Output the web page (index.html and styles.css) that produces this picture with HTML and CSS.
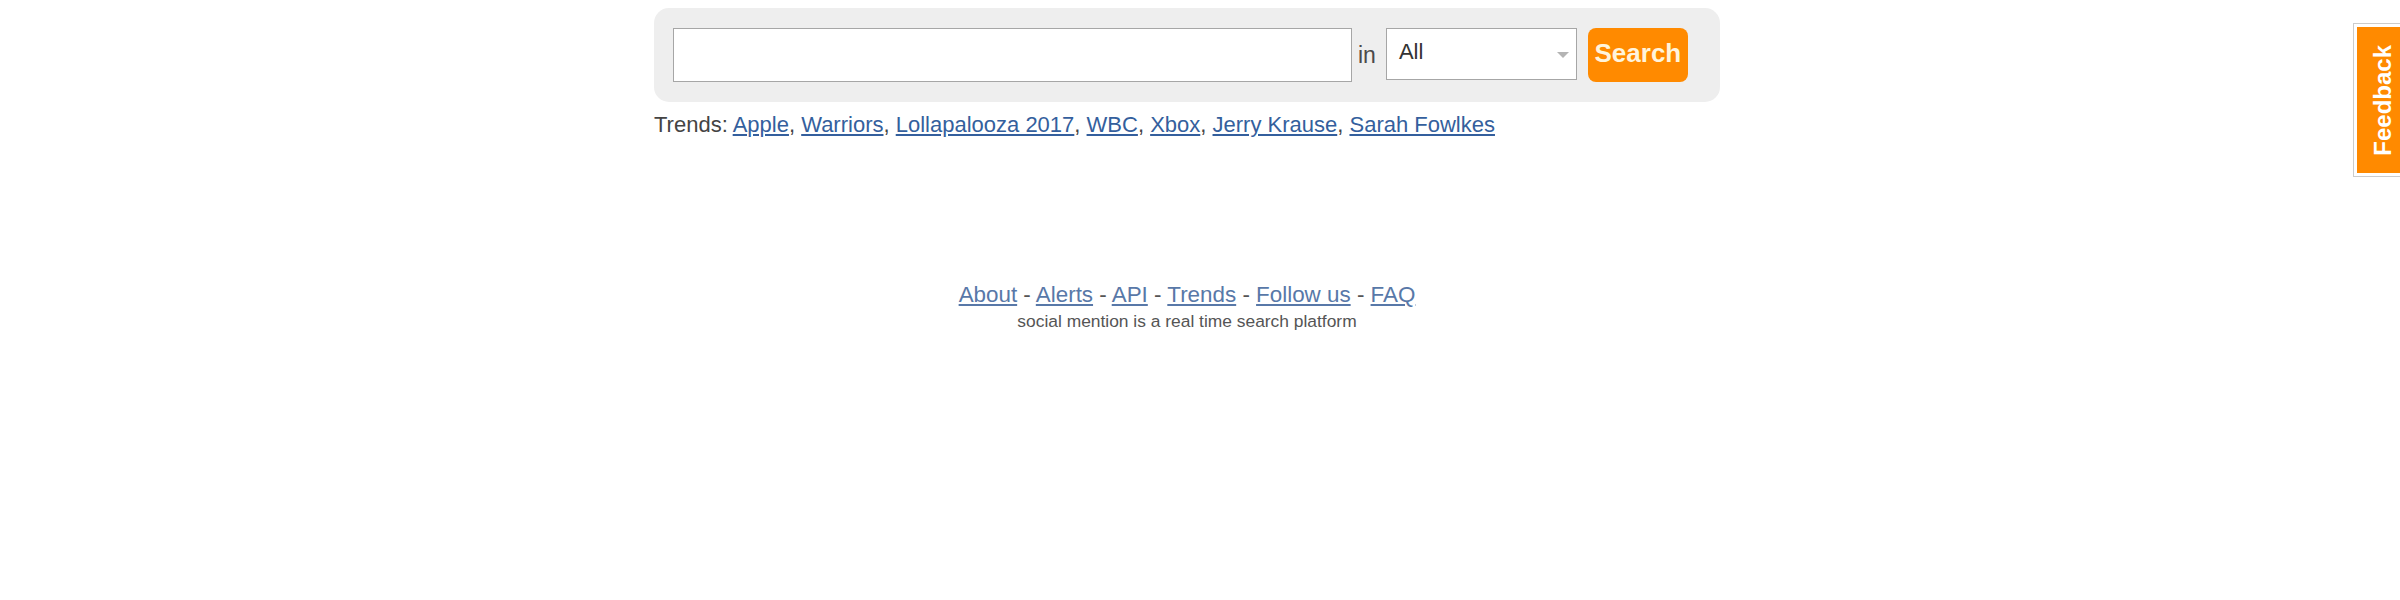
FILE: index.html
```html
<!DOCTYPE html>
<html lang="en">
<head>
<meta charset="utf-8">
<title>Social Mention</title>
<link rel="stylesheet" href="styles.css">
</head>
<body>
<div class="page">
  <div class="column">
    <form class="search-box">
      <input class="query" type="text">
      <span class="in">in</span>
      <div class="select"><span class="select-value">All</span><span class="select-arrow"></span></div>
      <button class="search-btn" type="button">Search</button>
    </form>
    <div class="trends">Trends: <a href="#">Apple</a>, <a href="#">Warriors</a>, <a href="#">Lollapalooza 2017</a>, <a href="#">WBC</a>, <a href="#">Xbox</a>, <a href="#">Jerry Krause</a>, <a href="#">Sarah Fowlkes</a></div>
    <div class="footer">
      <div class="footer-links"><a href="#">About</a> - <a href="#">Alerts</a> - <a href="#">API</a> - <a href="#">Trends</a> - <a href="#">Follow us</a> - <a href="#">FAQ</a></div>
      <div class="tagline">social mention is a real time search platform</div>
    </div>
  </div>
</div>
<div class="feedback"><div class="feedback-inner"><span class="feedback-text">Feedback</span></div></div>
</body>
</html>
```

FILE: styles.css
```css
html, body {
  margin: 0;
  padding: 0;
  background: #ffffff;
}
body {
  font-family: "Liberation Sans", Arial, sans-serif;
  color: #444444;
}
.page {
  padding-right: 26px;
}
.column {
  width: 1066px;
  margin: 0 auto;
  padding-top: 8px;
}
.search-box {
  margin: 0;
  background: #eeeeee;
  border-radius: 15px;
  padding: 20px 32px 20px 19px;
  display: flex;
  align-items: center;
  height: 54px;
}
.query {
  box-sizing: border-box;
  width: 679px;
  height: 54px;
  margin: 0;
  border: 1px solid #a6a6a6;
  background: #ffffff;
  padding: 0 6px;
  font-family: "Liberation Sans", Arial, sans-serif;
  font-size: 22px;
}
.in {
  font-size: 23px;
  color: #4a4a4a;
  margin: 1px 10px 0 6px;
}
.select {
  box-sizing: border-box;
  width: 191px;
  height: 52px;
  align-self: flex-start;
  border: 1px solid #a6a6a6;
  background: #ffffff;
  display: flex;
  align-items: center;
  justify-content: space-between;
  padding: 0 7px 0 12px;
}
.select-value {
  font-size: 22px;
  color: #333333;
  margin-top: -4px;
}
.select-arrow {
  width: 0;
  height: 0;
  border-left: 6px solid transparent;
  border-right: 6px solid transparent;
  border-top: 6px solid #b4b4b4;
  margin-top: 2px;
}
.search-btn {
  box-sizing: border-box;
  width: 100px;
  height: 54px;
  margin-left: 11px;
  border: none;
  border-radius: 8px;
  background: #ff8a00;
  color: #fff4dc;
  font-family: "Liberation Sans", Arial, sans-serif;
  font-weight: bold;
  font-size: 26px;
  padding: 0 0 4px 0;
}
.trends {
  margin-top: 11px;
  font-size: 22px;
  line-height: 24px;
  color: #444444;
}
.trends a {
  color: #345f9d;
}
.footer {
  margin-top: 145px;
  text-align: center;
}
.footer-links {
  font-size: 22.4px;
  line-height: 25px;
  color: #555555;
}
.footer-links a {
  color: #5878a8;
}
.tagline {
  margin-top: 5px;
  font-size: 17.4px;
  line-height: 19px;
  color: #555555;
}
.feedback {
  position: absolute;
  top: 23px;
  right: 0;
  border: 1px solid #cccccc;
  border-right: none;
  background: #ffffff;
  padding: 3px 0 3px 3px;
}
.feedback-inner {
  box-sizing: border-box;
  width: 43px;
  height: 146px;
  padding-left: 9px;
  background: #ff8a00;
  display: flex;
  align-items: center;
  justify-content: center;
}
.feedback-text {
  writing-mode: vertical-rl;
  transform: rotate(180deg);
  color: #ffffff;
  font-weight: bold;
  font-size: 24px;
  line-height: 24px;
}
```
